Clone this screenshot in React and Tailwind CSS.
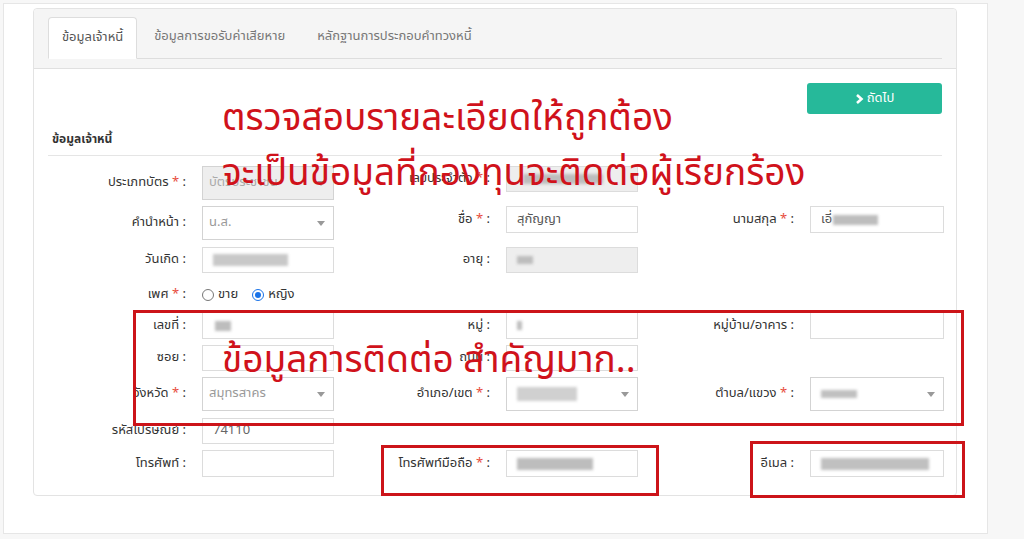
import React from "react";

const FONT = { fontFamily: "Tahoma, 'Noto Sans Thai', 'Noto Sans', 'DejaVu Sans', sans-serif" };

function Blur({ w, h = 12, className = "" }) {
  return (
    <span
      className={"inline-block bg-[#bdbdbd] blur-[1.5px] " + className}
      style={{ width: w, height: h }}
    />
  );
}

function Label({ text, req, extra = "" }) {
  return (
    <div className={"w-[138px] shrink-0 text-right text-[13px] text-[#333] whitespace-nowrap " + extra}>
      {text}
      {req && <span className="text-[#e74c3c]"> *</span>}
      <span> :</span>
    </div>
  );
}

function Caret() {
  return <span className="ml-auto mr-[8px] w-0 h-0 border-l-[4px] border-r-[4px] border-t-[5px] border-l-transparent border-r-transparent border-t-[#999]" />;
}

function Field({ label, req, kind = "text", h = 27, w = 132, disabled, children }) {
  const base =
    "ml-[16px] flex items-center border text-[13px] shrink-0 " +
    (kind === "select"
      ? "border-[#d3d3d3] pl-[6px] text-[#999] "
      : "border-[#dcdcdc] pl-[10px] text-[#555] ") +
    (disabled ? "bg-[#eeeeee] " : "bg-white ");
  return (
    <div className="w-[285px] flex items-center shrink-0" style={{ height: h }}>
      <Label text={label} req={req} />
      <div className={base} style={{ height: h, width: w }}>
        {children}
        {kind === "select" && <Caret />}
      </div>
    </div>
  );
}

function Empty({ h }) {
  return <div className="w-[285px] shrink-0" style={{ height: h }} />;
}

function Row({ children, mt }) {
  return (
    <div className="flex items-start gap-[19px]" style={{ marginTop: mt }}>
      {children}
    </div>
  );
}

export default function App() {
  return (
    <div className="w-[1024px] h-[539px] bg-[#f7f7f7] overflow-hidden relative" style={FONT}>
      <div className="ml-[3px] mt-[3px] w-[985px] h-[531px] bg-white border border-[#e6e6e6] pl-[29px] pt-[4px]">
        <div className="w-[924px] border border-[#e3e3e3] rounded-[4px] bg-white">
          {/* header with tabs */}
          <div className="h-[60px] bg-[#f5f5f5] border-b border-[#e0e0e0] rounded-t-[4px] px-[14px] pt-[8px]">
            <div className="flex h-[42px] border-b border-[#dddddd] items-end">
              <div className="h-[42px] -mb-px px-[13px] flex items-center bg-white border border-[#dddddd] border-b-white rounded-t-[4px] text-[13px] text-[#555]">
                ข้อมูลเจ้าหนี้
              </div>
              <div className="h-[42px] ml-[2px] px-[15px] flex items-center text-[13px] text-[#777]">
                ข้อมูลการขอรับค่าเสียหาย
              </div>
              <div className="h-[42px] ml-[2px] px-[15px] flex items-center text-[13px] text-[#777]">
                หลักฐานการประกอบคำทวงหนี้
              </div>
            </div>
          </div>

          {/* body */}
          <div className="px-[14px] pt-[14px] pb-[18px]">
            <div className="flex justify-end">
              <button className="w-[135px] h-[31px] bg-[#26b99a] rounded-[3px] text-white text-[13px] flex items-center justify-center gap-[3px]">
                <svg width="9" height="10" viewBox="0 0 9 10">
                  <path d="M2 1 L6.5 5 L2 9" stroke="white" strokeWidth="2.6" fill="none" strokeLinejoin="miter" />
                </svg>
                ถัดไป
              </button>
            </div>

            <div className="mt-[17px] pl-[4px] pb-[8px] border-b border-[#e5e5e5] text-[12px] font-bold text-[#333] leading-[16px]">
              ข้อมูลเจ้าหนี้
            </div>

            {/* R1 */}
            <Row mt={10}>
              <Field label="ประเภทบัตร" req kind="select" h={34} disabled>
                <span className="text-[#aaa]">บัตรประชาชน</span>
              </Field>
              <Field label="เลขประจำตัว" req h={26} disabled>
                <Blur w={80} h={10} className="ml-[6px] bg-[#b5b5b5]" />
              </Field>
              <Empty h={26} />
            </Row>
            {/* R2 */}
            <Row mt={6}>
              <Field label="คำนำหน้า" kind="select" h={34}>
                <span className="text-[#999]">น.ส.</span>
              </Field>
              <Field label="ชื่อ" req h={27}>
                <span>สุกัญญา</span>
              </Field>
              <Field label="นามสกุล" req h={27} w={134}>
                <span>เอี่</span>
                <Blur w={45} h={10} className="ml-[1px]" />
              </Field>
            </Row>
            {/* R3 */}
            <Row mt={7}>
              <Field label="วันเกิด" h={26}>
                <Blur w={75} h={12} className="bg-[#c8c8c8]" />
              </Field>
              <Field label="อายุ" h={26} disabled>
                <Blur w={16} h={8} className="bg-[#aaa]" />
              </Field>
              <Empty h={26} />
            </Row>
            {/* R4 */}
            <div className="flex items-center h-[30px] mt-[7px]">
              <Label text="เพศ" req />
              <div className="ml-[16px] flex items-center text-[13px] text-[#333]">
                <span className="w-[12px] h-[12px] rounded-full border border-[#777] bg-white" />
                <span className="ml-[4px]">ขาย</span>
                <span className="ml-[14px] w-[12px] h-[12px] rounded-full border-[1.5px] border-[#1a73e8] bg-white flex items-center justify-center">
                  <span className="w-[6px] h-[6px] rounded-full bg-[#1a73e8]" />
                </span>
                <span className="ml-[4px]">หญิง</span>
              </div>
            </div>
            {/* R5 */}
            <Row mt={2}>
              <Field label="เลขที่" h={27}>
                <Blur w={16} h={10} className="ml-[2px] bg-[#b0b0b0]" />
              </Field>
              <Field label="หมู่" h={27}>
                <Blur w={5} h={9} className="bg-[#bbb]" />
              </Field>
              <Field label="หมู่บ้าน/อาคาร" h={27} w={134} />
            </Row>
            {/* R6 */}
            <Row mt={6}>
              <Field label="ซอย" h={26} />
              <Field label="ถนน" h={26} />
              <Empty h={26} />
            </Row>
            {/* R7 */}
            <Row mt={6}>
              <Field label="จังหวัด" req kind="select" h={34}>
                <span className="text-[#999]">สมุทรสาคร</span>
              </Field>
              <Field label="อำเภอ/เขต" req kind="select" h={34}>
                <Blur w={60} h={14} className="ml-[4px] bg-[#d0d0d0]" />
              </Field>
              <Field label="ตำบล/แขวง" req kind="select" h={34} w={134}>
                <Blur w={36} h={8} className="ml-[4px] bg-[#c0c0c0]" />
              </Field>
            </Row>
            {/* R8 */}
            <Row mt={7}>
              <Field label="รหัสไปรษณีย์" h={26}>
                <span className="text-[#666]">74110</span>
              </Field>
              <Empty h={26} />
              <Empty h={26} />
            </Row>
            {/* R9 */}
            <Row mt={6}>
              <Field label="โทรศัพท์" h={27} />
              <Field label="โทรศัพท์มือถือ" req h={27}>
                <Blur w={76} h={12} className="bg-[#b8b8b8]" />
              </Field>
              <Field label="อีเมล" h={27} w={134}>
                <Blur w={108} h={12} className="bg-[#c0c0c0]" />
              </Field>
            </Row>
          </div>
        </div>
      </div>

      {/* annotations */}
      <div className="absolute left-[222px] top-[95px] text-[37px] leading-[48px] text-[#d0121b] whitespace-nowrap">
        ตรวจสอบรายละเอียดให้ถูกต้อง
      </div>
      <div className="absolute left-[222px] top-[150px] text-[37px] leading-[48px] text-[#d0121b] whitespace-nowrap">
        จะเป็นข้อมูลที่กองทุนจะติดต่อผู้เรียกร้อง
      </div>
      <div className="absolute left-[222px] top-[337px] text-[37px] leading-[48px] text-[#d0121b] whitespace-nowrap">
        ข้อมูลการติดต่อ สำคัญมาก..
      </div>
      <div className="absolute left-[133px] top-[310px] w-[831px] h-[116px] border-[3px] border-[#cc1419]" />
      <div className="absolute left-[381px] top-[445px] w-[278px] h-[51px] border-[3px] border-[#cc1419]" />
      <div className="absolute left-[750px] top-[441px] w-[215px] h-[57px] border-[3px] border-[#cc1419]" />
    </div>
  );
}
